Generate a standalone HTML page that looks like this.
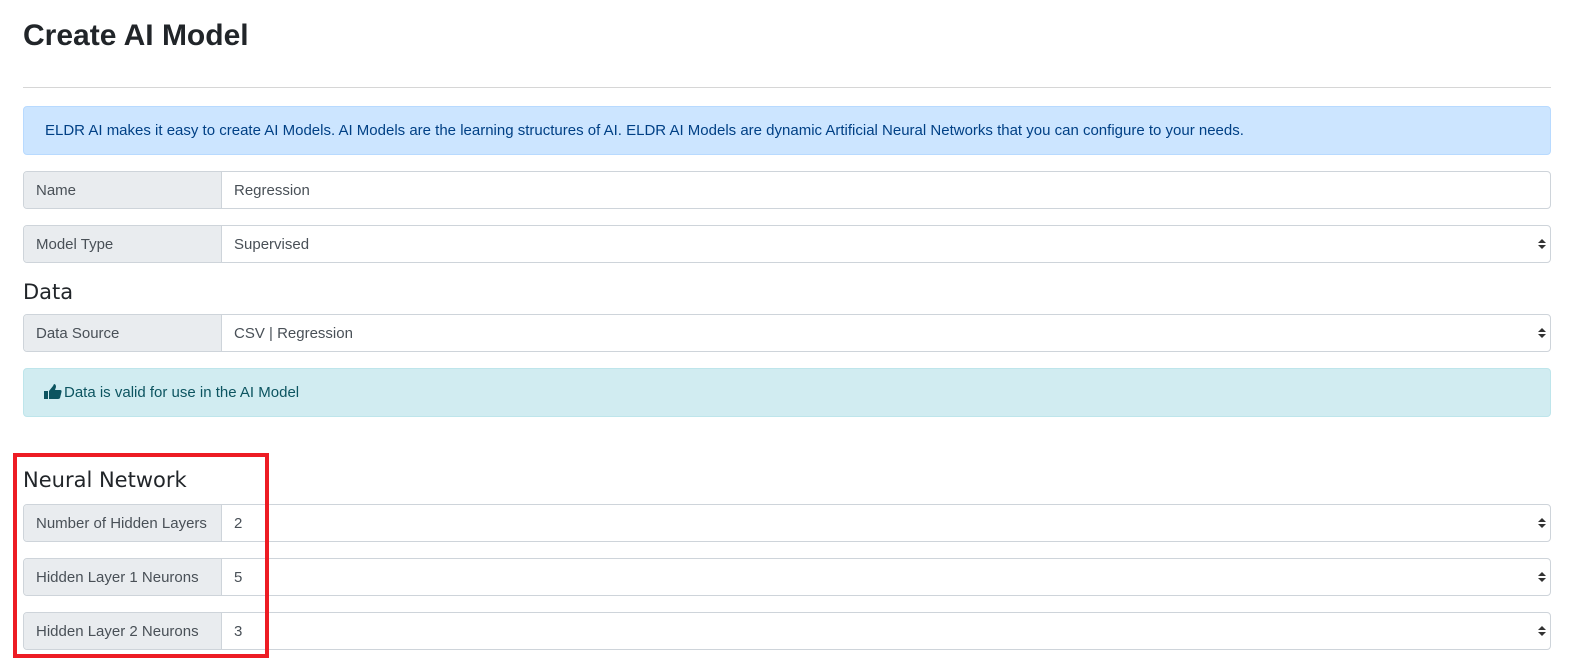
<!DOCTYPE html>
<html><head><style>
body{margin:0;background:#fff;font-family:"Liberation Sans",sans-serif;color:#212529;width:1578px;height:664px;overflow:hidden;position:relative}
.a{position:absolute}
h1{position:absolute;left:23px;top:19px;margin:0;font-size:30px;font-weight:bold;color:#212529}
.hr{left:23px;width:1528px;top:87px;height:1px;background:#d6d6d6}
.alert{left:23px;width:1528px;border-radius:4px;font-size:15px;line-height:48px;box-sizing:border-box;padding-left:21px}
.row{left:23px;width:1528px;height:38px;border:1px solid #ced4da;border-radius:4px;box-sizing:border-box;font-size:15px;color:#495057;display:flex;overflow:hidden}
.lab{width:198px;background:#e9ecef;border-right:1px solid #ced4da;padding-left:12px;line-height:37px;box-sizing:border-box;flex:none;white-space:nowrap}
.val{padding-left:12px;line-height:37px;flex:1;position:relative}
.car{position:absolute;right:12px;top:13px;width:0;height:0}
.car:before{content:"";position:absolute;left:0;top:0;border:4px solid transparent;border-bottom:4px solid #333;border-top:0}
.car:after{content:"";position:absolute;left:0;top:6px;border:4px solid transparent;border-top:4px solid #333;border-bottom:0}
h4{position:absolute;left:23px;margin:0;font-size:21px;font-weight:normal;color:#212529;font-family:"DejaVu Sans",sans-serif}
</style></head><body>
<h1>Create AI Model</h1>
<div class="a hr"></div>
<div class="a alert" style="top:106px;height:49px;background:#cce5ff;border:1px solid #b8daff;color:#004085">ELDR AI makes it easy to create AI Models. AI Models are the learning structures of AI. ELDR AI Models are dynamic Artificial Neural Networks that you can configure to your needs.</div>
<div class="a row" style="top:171px"><div class="lab">Name</div><div class="val">Regression</div></div>
<div class="a row" style="top:225px"><div class="lab">Model Type</div><div class="val">Supervised<span class="car"></span></div></div>
<h4 style="top:280px">Data</h4>
<div class="a row" style="top:314px"><div class="lab">Data Source</div><div class="val">CSV | Regression<span class="car"></span></div></div>
<div class="a alert" style="top:368px;height:49px;background:#d1ecf1;border:1px solid #bee5eb;color:#0c5460;padding-left:20px"><svg width="18" height="15" viewBox="0 0 18 15" style="vertical-align:-2px;margin-right:2px"><rect x="0" y="7" width="4" height="8" fill="#0c5460"/><path d="M5 7 L9 2 L10 0 Q12 0 12 3 L11 6 L16 6 Q18 6 17.5 8 L16 14 Q15.5 15 14 15 L5 15 Z" fill="#0c5460"/></svg>Data is valid for use in the AI Model</div>
<h4 style="top:468px">Neural Network</h4>
<div class="a row" style="top:504px"><div class="lab">Number of Hidden Layers</div><div class="val">2<span class="car"></span></div></div>
<div class="a row" style="top:558px"><div class="lab">Hidden Layer 1 Neurons</div><div class="val">5<span class="car"></span></div></div>
<div class="a row" style="top:612px"><div class="lab">Hidden Layer 2 Neurons</div><div class="val">3<span class="car"></span></div></div>
<div class="a" style="left:13px;top:453px;width:248px;height:197px;border:4px solid #ed1c24"></div>
</body></html>
